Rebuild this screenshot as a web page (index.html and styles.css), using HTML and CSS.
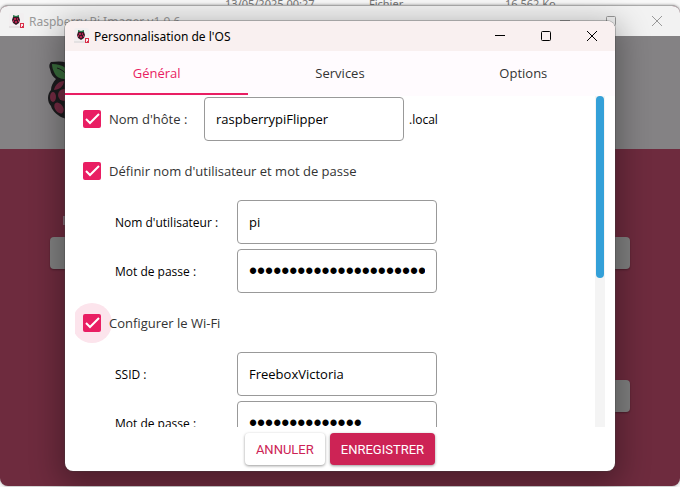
FILE: index.html
```
<!DOCTYPE html>
<html lang="fr">
<head>
    <meta charset="UTF-8">
    <meta name="viewport" content="width=device-width, initial-scale=1.0">
    <title>Raspberry Pi Imager</title>
    <link rel="stylesheet" href="styles.css">
</head>
<body>
    <!-- shared drawings -->
    <svg class="defs" width="0" height="0" aria-hidden="true">
        <symbol id="raspberry" viewBox="0 0 48 60">
            <path d="M24 6C19 1 12 1 3 2C1 4 1 7 2 9C3 14 5 17 8 19C5 22 3 26 3 30C-1 34 -1 42 3 46C4 51 11 57 16 58C20 61 28 61 32 58C37 57 44 51 45 46C49 42 49 34 45 30C45 26 43 22 40 19C43 17 45 14 46 9C47 7 47 4 45 2C36 1 29 1 24 6Z" fill="#1b1b1d"/>
            <path d="M22 19C22 9 15 4 4 4C4 7 5 10 6 12C8 17 12 20 22 19ZM26 19C26 9 33 4 44 4C44 7 43 10 42 12C40 17 36 20 26 19Z" class="leaf"/>
            <path d="M9 8C13 9 17 12 20 16M39 8C35 9 31 12 28 16" fill="none" stroke="#1b1b1d"/>
            <g class="fruit">
                <path d="M16 21C11 21 7 25 6 30C11 30 16 26 16 21ZM32 21C37 21 41 25 42 30C37 30 32 26 32 21Z"/>
                <ellipse cx="24" cy="24" rx="6" ry="3"/>
                <ellipse cx="16" cy="35" rx="6" ry="6"/>
                <ellipse cx="32" cy="35" rx="6" ry="6"/>
                <ellipse cx="5" cy="37" rx="3" ry="5"/>
                <ellipse cx="43" cy="37" rx="3" ry="5"/>
                <ellipse cx="24" cy="47" rx="6" ry="6"/>
                <ellipse cx="11" cy="48" rx="4" ry="6" transform="rotate(-35 11 48)"/>
                <ellipse cx="37" cy="48" rx="4" ry="6" transform="rotate(35 37 48)"/>
                <ellipse cx="24" cy="56" rx="5" ry="2"/>
            </g>
        </symbol>
        <symbol id="app-icon" viewBox="0 0 16 16">
            <rect x="0" y="0" width="15" height="15" rx="2" fill="#f2eff0"/>
            <path d="M0 14h11" stroke="#d5d2d3"/>
            <path d="M4 2l3 1 3-1v2H4z" fill="#28784a"/>
            <path d="M4 4h6l1 3-1 3-3 2-3-2-1-3z" fill="#3a1726"/>
            <path d="M5 5h2v2H5zM8 5h1v2H8zM4 7h1v2H4zM6 8h2v2H6zM9 7h1v2H9z" fill="#b3224c"/>
            <path d="M11 10h4v5h-4z" fill="#d8304a"/>
            <path d="M12 11h2v2h-1v1h-1z" fill="#fbe9ec"/>
        </symbol>
        <symbol id="minimize" viewBox="0 0 12 12"><path d="M1 5.5h10"/></symbol>
        <symbol id="maximize" viewBox="0 0 12 12"><rect x="1.5" y="1.5" width="9" height="9" rx="1"/></symbol>
        <symbol id="close" viewBox="0 0 12 12"><path d="M1 1l10 10M11 1L1 11"/></symbol>
    </svg>

    <div class="file-list">
        <span>13/05/2025 00:27</span>
        <span>Fichier</span>
        <span>16 562 Ko</span>
    </div>

    <div class="window main-window">
        <div class="titlebar">
            <svg class="app-icon"><use href="#app-icon"/></svg>
            <span class="title">Raspberry Pi Imager v1.9.6</span>
            <button class="control" aria-label="Réduire"><svg><use href="#minimize"/></svg></button>
            <button class="control" aria-label="Agrandir"><svg><use href="#maximize"/></svg></button>
            <button class="control" aria-label="Fermer"><svg><use href="#close"/></svg></button>
        </div>
        <div class="banner">
            <svg class="logo"><use href="#raspberry"/></svg>
        </div>
        <div class="main-body">
            <div class="mark"></div>
            <button class="choice" aria-label="Choisir"></button>
            <button class="choice next" aria-label="Suivant"></button>
        </div>
    </div>

    <div class="window dialog">
        <div class="titlebar">
            <svg class="app-icon"><use href="#app-icon"/></svg>
            <span class="title">Personnalisation de l'OS</span>
            <button class="control" aria-label="Réduire"><svg><use href="#minimize"/></svg></button>
            <button class="control" aria-label="Agrandir"><svg><use href="#maximize"/></svg></button>
            <button class="control" aria-label="Fermer"><svg><use href="#close"/></svg></button>
        </div>

        <div class="tabs">
            <button class="tab active">Général</button>
            <button class="tab">Services</button>
            <button class="tab">Options</button>
        </div>

        <div class="scroll-area">
            <form class="settings" id="settings">
                <div class="row">
                    <label class="check host-check"><input type="checkbox" checked>Nom d'hôte :</label>
                    <input class="field" type="text" aria-label="Nom d'hôte" value="raspberrypiFlipper">
                    <span class="suffix">.local</span>
                </div>
                <div class="row check-row">
                    <label class="check"><input type="checkbox" checked>Définir nom d'utilisateur et mot de passe</label>
                </div>
                <div class="row sub">
                    <label for="user">Nom d'utilisateur :</label>
                    <input class="field" id="user" type="text" value="pi">
                </div>
                <div class="row sub">
                    <label for="user-pass">Mot de passe :</label>
                    <input class="field" id="user-pass" type="password" value="aaaaaaaaaaaaaaaaaaaaaa">
                </div>
                <div class="row check-row">
                    <label class="check ripple"><input type="checkbox" checked>Configurer le Wi-Fi</label>
                </div>
                <div class="row sub">
                    <label for="ssid">SSID :</label>
                    <input class="field" id="ssid" type="text" value="FreeboxVictoria">
                </div>
                <div class="row sub">
                    <label for="wifi-pass">Mot de passe :</label>
                    <input class="field" id="wifi-pass" type="password" value="aaaaaaaaaaaaaa">
                </div>
            </form>
            <div class="scrollbar"><div class="thumb"></div></div>
        </div>

        <div class="actions">
            <button class="btn">ANNULER</button>
            <button class="btn primary" form="settings">ENREGISTRER</button>
        </div>
    </div>
</body>
</html>
```

FILE: styles.css
```
* {
    box-sizing: border-box;
}

body {
    margin: 0;
    height: 100vh;
    overflow: hidden;
    position: relative;
    background: #f8f8f8;
    font-family: "Noto Sans", "Open Sans", sans-serif;
    font-size: 11px;
    color: #000;
}

button {
    font: inherit;
    border: 0;
    padding: 0;
    background: none;
}

.defs {
    position: absolute;
}

.file-list {
    display: grid;
    grid-template-columns: 144px 136px 1fr;
    padding-left: 225px;
    height: 5px;
    line-height: 8px;
    color: #777;
    overflow: hidden;
}

/* windows */
.window {
    position: absolute;
    display: flex;
    flex-direction: column;
    border-radius: 8px;
    overflow: hidden;
}

.main-window {
    top: 5px;
    left: 0;
    right: 0;
    bottom: 1px;
    background: #6e2b3e;
    border-top: 1px solid #aaa;
    box-shadow: 0 0 3px rgba(0, 0, 0, 0.4);
}

.dialog {
    top: 21px;
    left: 65px;
    right: 65px;
    bottom: 16px;
    background: #fff;
    box-shadow: 0 0 0 1px rgba(60, 60, 60, 0.3), 0 8px 30px 6px rgba(0, 0, 0, 0.3);
}

.titlebar {
    display: flex;
    flex: none;
    align-items: center;
    height: 30px;
    padding-left: 9px;
    background: #f9f0f0;
}

.main-window .titlebar {
    background: #f2f2f2;
    color: #999;
}

.app-icon {
    width: 16px;
    height: 16px;
    margin-right: 4px;
}

.title {
    flex: 1;
    font-size: 12px;
}

.control {
    display: flex;
    align-items: center;
    justify-content: center;
    width: 46px;
    height: 30px;
    color: inherit;
}

.control svg {
    width: 12px;
    height: 12px;
    fill: none;
    stroke: currentColor;
}

/* main window content */
.banner {
    flex: none;
    height: 113px;
    padding: 24px 48px;
    background: #848284;
}

.logo {
    display: block;
    width: 48px;
    height: 60px;
}

.leaf {
    fill: #386b3b;
}

.fruit {
    fill: #722a41;
}

.main-body {
    display: flex;
    flex-direction: column;
    padding: 67px 50px 0;
}

.mark {
    width: 8px;
    height: 9px;
    margin: 0 13px 12px;
    background: #88717b;
}

.choice {
    height: 32px;
    border-radius: 4px;
    background: #808080;
    box-shadow: 0 1px 2px rgba(0, 0, 0, 0.3);
}

.choice.next {
    align-self: flex-end;
    width: 120px;
    margin-top: 111px;
}

/* tabs */
.tabs {
    display: flex;
    flex: none;
    height: 45px;
    padding-bottom: 1px;
    background: #fffbfe;
    font-family: "Open Sans", "Noto Sans", sans-serif;
    font-size: 13px;
}

.tab {
    flex: 1;
    color: #333;
    border-top: 2px solid transparent;
    border-bottom: 2px solid transparent;
}

.tab.active {
    color: #e91e63;
    border-bottom-color: #e91e63;
}

/* settings */
.scroll-area {
    display: flex;
    flex: 1;
    min-height: 0;
    padding: 0 10px;
    font-family: "Open Sans", "Noto Sans", sans-serif;
}

.settings {
    flex: 1;
    display: flex;
    flex-direction: column;
    gap: 5px;
    padding-top: 1px;
    overflow: hidden;
}

.row {
    display: flex;
    flex: none;
    align-items: center;
    gap: 5px;
    height: 44px;
    padding-left: 8px;
}

.check-row {
    height: 49px;
}

.row.sub {
    padding-left: 40px;
}

.sub label {
    width: 117px;
    font-size: 12px;
}

.check {
    position: relative;
    isolation: isolate;
    display: flex;
    align-items: center;
    gap: 8px;
    font-size: 13px;
    color: #333;
}

.host-check {
    width: 116px;
}

.check input {
    appearance: none;
    width: 18px;
    height: 18px;
    margin: 0;
    border-radius: 2px;
    border: 2px solid #777;
}

.check input:checked {
    border: 0;
    background: #e91e63 url("data:image/svg+xml,%3Csvg xmlns='http://www.w3.org/2000/svg' viewBox='0 0 18 18'%3E%3Cpath d='M3 9l4 4 9-9' fill='none' stroke='%23fff' stroke-width='2'/%3E%3C/svg%3E");
}

.ripple::before {
    content: "";
    position: absolute;
    z-index: -1;
    top: 50%;
    left: -11px;
    width: 40px;
    height: 40px;
    margin-top: -20px;
    border-radius: 50%;
    background: #fce4ec;
}

.suffix {
    font-size: 12px;
}

.field {
    width: 200px;
    height: 44px;
    padding: 0 11px;
    border: 1px solid #999;
    border-radius: 4px;
    background: #fff;
    color: #000;
    font: inherit;
    font-size: 13px;
}

.field[type="password"] {
    font-family: "Liberation Sans", sans-serif;
    font-size: 23px;
}

.scrollbar {
    width: 10px;
    padding: 0 1px;
    background: #f4f4f4;
}

.thumb {
    height: 55%;
    border-radius: 4px;
    background: #34a0d8;
}

/* buttons */
.actions {
    display: flex;
    flex: none;
    justify-content: center;
    gap: 5px;
    padding: 6px;
}

.btn {
    height: 32px;
    padding: 0 11px;
    border-radius: 4px;
    background: #fff;
    color: #cd2355;
    font-family: Roboto, sans-serif;
    font-size: 13px;
    box-shadow: 0 1px 3px rgba(0, 0, 0, 0.4);
}

.btn.primary {
    background: #cd2355;
    color: #fff;
}
```
